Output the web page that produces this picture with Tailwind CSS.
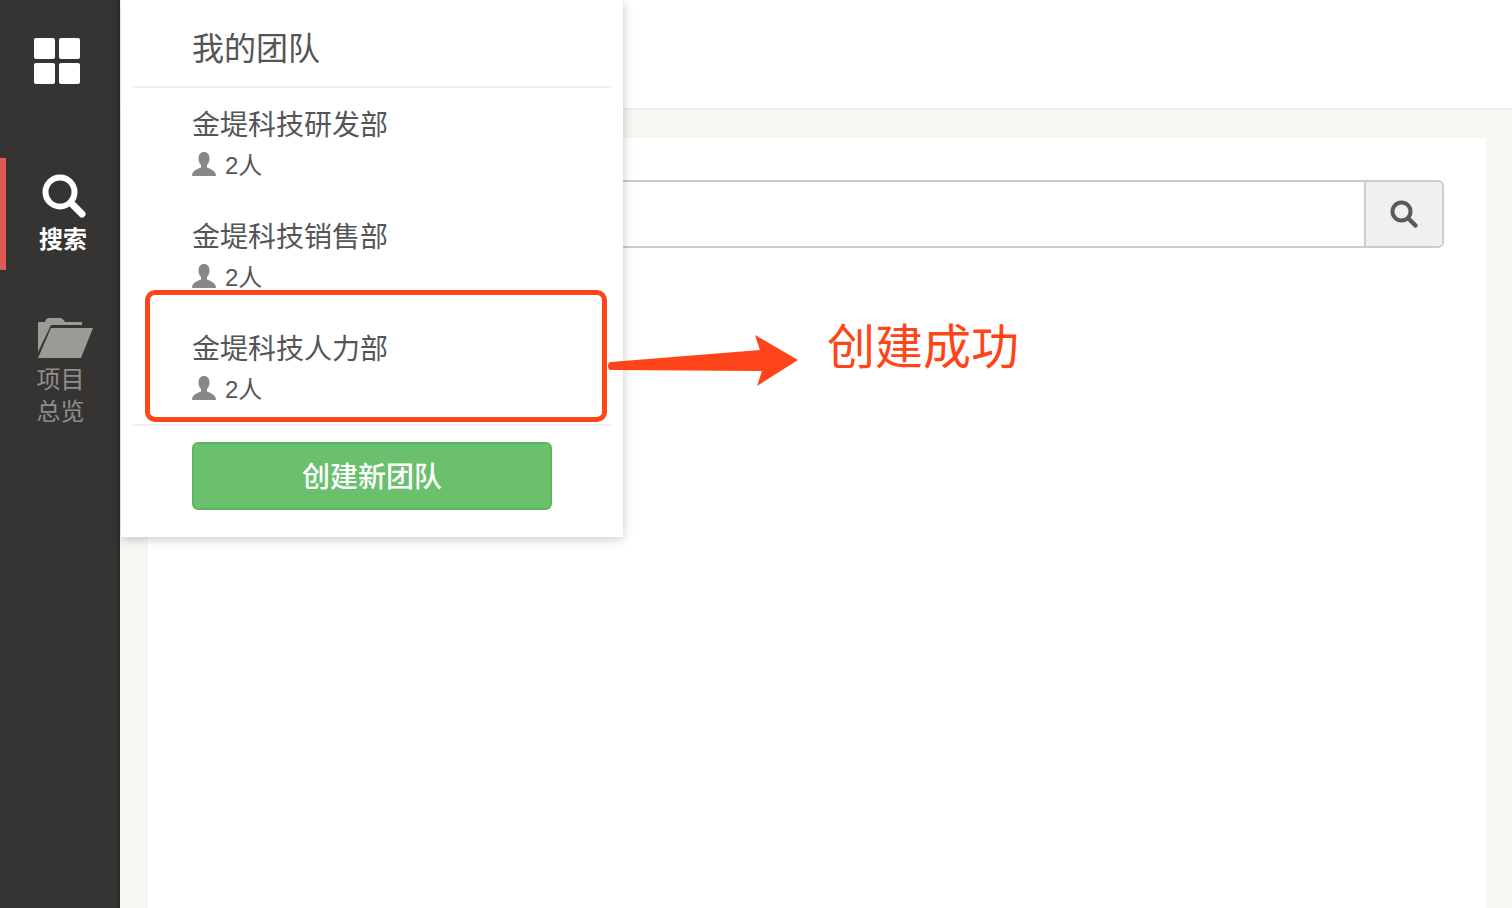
<!DOCTYPE html>
<html lang="zh-CN">
<head>
  <meta charset="UTF-8">
  <meta name="viewport" content="width=device-width, initial-scale=1.0">
  <title>我的团队</title>
  <script src="https://cdn.jsdelivr.net/npm/@tailwindcss/browser@4"></script>
</head>
<body class="h-screen overflow-hidden bg-white font-['Liberation_Sans','Noto_Sans_CJK_SC',sans-serif] text-[#555]">
  <div class="relative flex h-[908px] w-[1512px]">
    <!-- sidebar -->
    <nav class="flex w-[120px] shrink-0 flex-col border-r-2 border-[#2a2c2c] bg-[#353432]">
      <div class="h-[158px] pl-[34px] pt-[38px]">
        <div class="grid w-[46px] grid-cols-2 gap-[4px]">
          <div class="h-[21px] rounded-[2px] bg-white"></div>
          <div class="h-[21px] rounded-[2px] bg-white"></div>
          <div class="h-[21px] rounded-[2px] bg-white"></div>
          <div class="h-[21px] rounded-[2px] bg-white"></div>
        </div>
      </div>
      <div class="flex h-[112px] flex-col items-center border-l-[6px] border-[#e05a55] pl-[2px] pt-[16px]">
        <svg class="ml-[1px] h-[44px] w-[44px]" viewBox="0 0 44 44" fill="none" stroke="#fff" stroke-linecap="round">
          <circle cx="18" cy="18" r="14.5" stroke-width="6"/>
          <path d="M29 29l11 11" stroke-width="7"/>
        </svg>
        <span class="mt-[7px] text-[24px] leading-[30px] font-bold text-white">搜索</span>
      </div>
      <div class="flex flex-col items-center pt-[48px]">
        <svg class="ml-[14px] h-[40px] w-[56px]" viewBox="0 0 56 40" fill="#9b9a95">
          <path d="M0 4h7c1-3 2-4 4-4h11c2 0 4 2 5 4h17v3H13L0 34z"/>
          <path d="M13 10h42L43 40H0z"/>
        </svg>
        <span class="ml-[3px] mt-[6px] w-[48px] text-center text-[24px] leading-[32px] text-[#8f8e8a]">项目总览</span>
      </div>
    </nav>

    <!-- main -->
    <main class="flex min-w-0 flex-1 flex-col bg-[#f7f6f3]">
      <header class="h-[110px] shrink-0 border-b-2 border-[#eeede9] bg-white"></header>
      <div class="flex-1 pl-[28px] pr-[26px] pt-[28px]">
        <section class="h-full bg-white pl-[32px] pr-[42px] pt-[42px]">
          <div class="flex h-[68px] overflow-hidden rounded-[6px] border-2 border-[#ccc]">
            <div class="flex-1 bg-white"></div>
            <button class="flex w-[78px] items-center justify-center border-l-2 border-[#ccc] bg-[#f0f0f0]">
              <svg class="h-[30px] w-[30px]" viewBox="0 0 30 30" fill="none" stroke="#5a5a5a" stroke-linecap="round">
                <circle cx="12.500" cy="12.500" r="9" stroke-width="4"/>
                <path d="M19.500 19.500l7 7" stroke-width="4.500"/>
              </svg>
            </button>
          </div>
        </section>
      </div>
    </main>

    <!-- team dropdown -->
    <div class="absolute left-[121px] top-0 w-[502px] bg-white px-[11px] shadow-[0_2px_10px_rgba(0,0,0,0.22)]">
      <div class="flex h-[88px] items-center border-b-2 border-[#edf0f4] pl-[60px] pt-[12px] text-[32px] text-[#555]">我的团队</div>
      <ul class="border-b-2 border-[#edf0f4]">
        <li class="h-[112px] pl-[60px] pt-[18px]">
          <div class="text-[28px] leading-[40px]">金堤科技研发部</div>
          <div class="flex h-[40px] items-center gap-[9px] text-[24px]">
            <svg class="mb-[4px] h-[24px] w-[24px]" viewBox="0 0 24 24" fill="#888"><path d="M12 0c3.500 0 5.500 2.700 5.500 6.500 0 3-1.200 5.200-2.500 6.500v2.500c2.500 1.500 9 2.500 9 8.500H0c0-6 6.500-7 9-8.500V13C7.700 11.700 6.500 9.500 6.500 6.500 6.500 2.700 8.500 0 12 0z"/></svg>
            <span>2人</span>
          </div>
        </li>
        <li class="h-[112px] pl-[60px] pt-[18px]">
          <div class="text-[28px] leading-[40px]">金堤科技销售部</div>
          <div class="flex h-[40px] items-center gap-[9px] text-[24px]">
            <svg class="mb-[4px] h-[24px] w-[24px]" viewBox="0 0 24 24" fill="#888"><path d="M12 0c3.500 0 5.500 2.700 5.500 6.500 0 3-1.200 5.200-2.500 6.500v2.500c2.500 1.500 9 2.500 9 8.500H0c0-6 6.500-7 9-8.500V13C7.700 11.700 6.500 9.500 6.500 6.500 6.500 2.700 8.500 0 12 0z"/></svg>
            <span>2人</span>
          </div>
        </li>
        <li class="h-[112px] pl-[60px] pt-[18px]">
          <div class="text-[28px] leading-[40px]">金堤科技人力部</div>
          <div class="flex h-[40px] items-center gap-[9px] text-[24px]">
            <svg class="mb-[4px] h-[24px] w-[24px]" viewBox="0 0 24 24" fill="#888"><path d="M12 0c3.500 0 5.500 2.700 5.500 6.500 0 3-1.200 5.200-2.500 6.500v2.500c2.500 1.500 9 2.500 9 8.500H0c0-6 6.500-7 9-8.500V13C7.700 11.700 6.500 9.500 6.500 6.500 6.500 2.700 8.500 0 12 0z"/></svg>
            <span>2人</span>
          </div>
        </li>
      </ul>
      <div class="pb-[27px] pl-[60px] pt-[16px]">
        <button class="h-[68px] w-[360px] rounded-[6px] border-2 border-[#5cb85c] bg-[#6ac06d] pt-[4px] text-[28px] font-medium text-white">创建新团队</button>
      </div>
    </div>

    <!-- annotation -->
    <div class="absolute left-[145px] top-[290px] h-[132px] w-[462px] rounded-[10px] border-[5px] border-[#ff4419]"></div>
    <svg class="absolute left-[606px] top-[332px] h-[56px] w-[194px]" viewBox="0 0 194 56" fill="#ff4419">
      <path d="M5 30L154 18 149 3 192 28 151 54 156 39 5 38C1 38 1 30 5 30z"/>
    </svg>
    <span class="absolute left-[827px] top-[314px] text-[48px] leading-[68px] text-[#ff4419]">创建成功</span>
  </div>
</body>
</html>
